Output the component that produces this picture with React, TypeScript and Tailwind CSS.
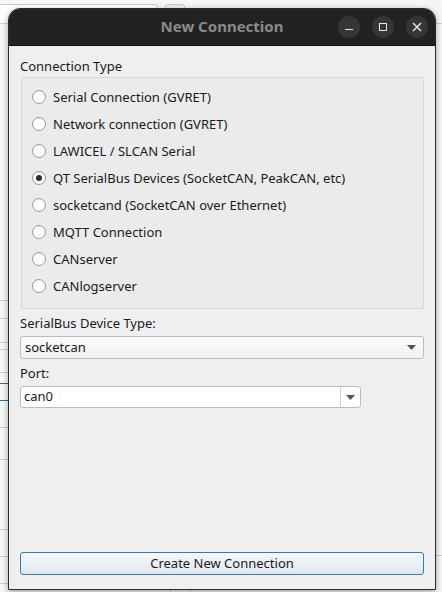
import React from "react";

const options = [
  "Serial Connection (GVRET)",
  "Network connection (GVRET)",
  "LAWICEL / SLCAN Serial",
  "QT SerialBus Devices (SocketCAN, PeakCAN, etc)",
  "socketcand (SocketCAN over Ethernet)",
  "MQTT Connection",
  "CANserver",
  "CANlogserver",
];

function Arrow() {
  return (
    <svg width="9" height="5" viewBox="0 0 9 5">
      <path d="M0 0 L9 0 L4.5 5 Z" fill="#555" />
    </svg>
  );
}

export default function App() {
  return (
    <div
      className="relative w-[442px] h-[592px] overflow-hidden bg-[#f6f6f6]"
      style={{ fontFamily: '"Noto Sans", "DejaVu Sans", sans-serif' }}
    >
      {/* background app hints */}
      <div className="absolute left-[-2px] top-[4px] w-[160px] h-[20px] border border-[#c8c8c8] rounded-[3px] bg-white" />
      <div className="absolute left-[165px] top-[4px] w-[20px] h-[20px] border border-[#c8c8c8] rounded-[3px] bg-[#f0f0f0]" />
      <div className="absolute left-0 top-[23px] w-[442px] h-px bg-[#cfcfcf]" />
      <div className="absolute left-0 top-[300px] w-[8px] h-px bg-[#cfcfcf]" />
      <div className="absolute left-0 top-[318px] w-[8px] h-px bg-[#cfcfcf]" />
      <div className="absolute left-0 top-[342px] w-[8px] h-px bg-[#cfcfcf]" />
      <div className="absolute left-0 top-[349px] w-[8px] h-px bg-[#cfcfcf]" />
      <div className="absolute left-0 top-[372px] w-[8px] h-px bg-[#cfcfcf]" />
      <div className="absolute left-0 top-[383px] w-[8px] h-px bg-[#1e6fb5]" />
      <div className="absolute left-0 top-[400px] w-[8px] h-px bg-[#1e6fb5]" />
      <div className="absolute left-0 top-[427px] w-[8px] h-px bg-[#cfcfcf]" />
      <div className="absolute left-0 top-[459px] w-[8px] h-px bg-[#cfcfcf]" />
      <div className="absolute left-0 top-[529px] w-[8px] h-px bg-[#cfcfcf]" />
      <div className="absolute left-0 top-[556px] w-[8px] h-px bg-[#cfcfcf]" />
      <div className="absolute left-0 top-[583px] w-[8px] h-px bg-[#cfcfcf]" />
      <div className="absolute left-[436px] top-[555px] w-[6px] h-px bg-[#cfcfcf]" />
      <div className="absolute left-[170px] top-[589px] w-px h-[3px] bg-[#cfcfcf]" />
      <div className="absolute left-[190px] top-[589px] w-px h-[3px] bg-[#cfcfcf]" />

      {/* dialog window */}
      <div className="absolute left-[8px] top-[8px] w-[428px] h-[582px] flex flex-col rounded-t-[12px] overflow-hidden border border-[#2a2a2a] shadow-[0_2px_6px_rgba(0,0,0,0.35)] bg-[#efefef]">
        {/* title bar */}
        <div className="relative h-[37px] shrink-0 bg-[#222222] border-b border-[#111] flex items-center justify-center">
          <span className="text-[15px] font-bold text-[#8a8a8a] -mt-[1px]">New Connection</span>
          <div className="absolute right-[7px] top-[7px] flex gap-[12px]">
            <div className="w-[22px] h-[22px] rounded-full bg-[#363636] flex items-center justify-center">
              <div className="w-[8px] h-[1.5px] bg-[#e6e6e6] mt-[5px]" />
            </div>
            <div className="w-[22px] h-[22px] rounded-full bg-[#363636] flex items-center justify-center">
              <div className="w-[8px] h-[8px] border-[1.5px] border-[#e6e6e6]" />
            </div>
            <div className="w-[22px] h-[22px] rounded-full bg-[#363636] flex items-center justify-center">
              <svg width="10" height="10" viewBox="0 0 10 10">
                <path d="M1 1 L9 9 M9 1 L1 9" stroke="#e6e6e6" strokeWidth="1.5" />
              </svg>
            </div>
          </div>
        </div>

        {/* content */}
        <div className="flex-1 flex flex-col px-[11px] pt-[12px] pb-[14px] text-[13px] text-[#1a1a1a]">
          <div className="leading-[16px]">Connection Type</div>
          <div className="mt-[3px] ml-[1px] border border-[#d6d6d6] rounded-[2px] bg-[#ebebeb] h-[232px] pt-[5px] pl-[10px]">
            {options.map((o, i) => (
              <div key={o} className="h-[27px] flex items-center gap-[7px]">
                <div className="w-[14px] h-[14px] rounded-full border border-[#9a9a9a] bg-white flex items-center justify-center shadow-[inset_0_1px_1px_rgba(0,0,0,0.08)]">
                  {i === 3 && <div className="w-[6px] h-[6px] rounded-full bg-[#2e2e2e]" />}
                </div>
                <span className="leading-[16px]">{o}</span>
              </div>
            ))}
          </div>

          <div className="mt-[6px] leading-[16px]">SerialBus Device Type:</div>
          <div className="mt-[5px] h-[23px] border border-[#bdbdbd] rounded-[3px] bg-gradient-to-b from-[#fbfbfb] to-[#f1f1f1] flex items-center justify-between pl-[4px] pr-[7px]">
            <span>socketcan</span>
            <Arrow />
          </div>

          <div className="mt-[6px] leading-[16px]">Port:</div>
          <div className="mt-[5px] w-[341px] h-[22px] border border-[#bdbdbd] rounded-[3px] bg-white flex items-center">
            <span className="flex-1 pl-[3px]">can0</span>
            <div className="w-px h-[20px] bg-[#d0d0d0]" />
            <div className="w-[19px] flex items-center justify-center">
              <Arrow />
            </div>
          </div>

          <div className="flex-1" />

          <div className="h-[23px] border border-[#3c78a8] rounded-[3px] bg-gradient-to-b from-[#f5f8fb] to-[#dfe7ee] flex items-center justify-center">
            <span>Create New Connection</span>
          </div>
        </div>
      </div>
    </div>
  );
}
